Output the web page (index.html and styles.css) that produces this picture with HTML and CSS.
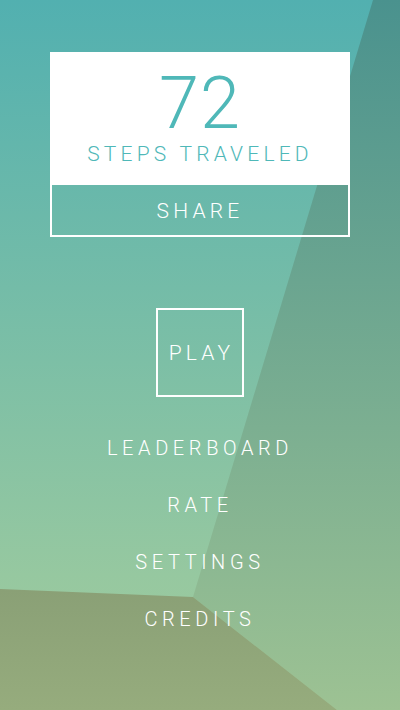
FILE: index.html
```html
<!DOCTYPE html>
<html>
<head>
<meta charset="utf-8">
<link rel="stylesheet" href="styles.css">
</head>
<body>
<div class="screen">
  <svg class="bg" width="400" height="710" viewBox="0 0 400 710" aria-hidden="true">
    <defs>
      <linearGradient id="gMain" x1="0" y1="0" x2="0" y2="710" gradientUnits="userSpaceOnUse">
        <stop offset="0" stop-color="#52b0b0"/>
        <stop offset="0.81" stop-color="#96c8a0"/>
        <stop offset="1" stop-color="#a2cc9c"/>
      </linearGradient>
      <linearGradient id="gRight" x1="0" y1="0" x2="0" y2="710" gradientUnits="userSpaceOnUse">
        <stop offset="0" stop-color="#4a928e"/>
        <stop offset="1" stop-color="#9dc293"/>
      </linearGradient>
      <linearGradient id="gBottom" x1="0" y1="589" x2="0" y2="710" gradientUnits="userSpaceOnUse">
        <stop offset="0" stop-color="#8aa076"/>
        <stop offset="1" stop-color="#96ac7d"/>
      </linearGradient>
    </defs>
    <rect x="0" y="0" width="400" height="710" fill="url(#gMain)"/>
    <polygon points="373,0 400,0 400,710 337,710 193,597" fill="url(#gRight)"/>
    <polygon points="0,589 193,597 337,710 0,710" fill="url(#gBottom)"/>
  </svg>

  <main class="content">
    <section class="card">
      <div class="card-top">
        <div class="score">72</div>
        <div class="score-label">STEPS TRAVELED</div>
      </div>
      <div class="share">SHARE</div>
    </section>

    <div class="play">PLAY</div>

    <nav class="menu">
      <div class="menu-item">LEADERBOARD</div>
      <div class="menu-item">RATE</div>
      <div class="menu-item">SETTINGS</div>
      <div class="menu-item">CREDITS</div>
    </nav>
  </main>
</div>
</body>
</html>
```

FILE: styles.css
```css
html, body {
  margin: 0;
  padding: 0;
}

body {
  width: 400px;
  height: 710px;
  overflow: hidden;
  font-family: Roboto, "Liberation Sans", sans-serif;
  font-weight: 300;
}

.screen {
  position: relative;
  width: 400px;
  height: 710px;
  overflow: hidden;
}

.bg {
  position: absolute;
  left: 0;
  top: 0;
  display: block;
}

.content {
  position: relative;
  display: flex;
  flex-direction: column;
  align-items: center;
  padding-top: 52px;
  color: #ffffff;
}

.card {
  width: 296px;
  border: 2px solid #ffffff;
  display: flex;
  flex-direction: column;
}

.card-top {
  background: #ffffff;
  height: 131px;
  display: flex;
  flex-direction: column;
  align-items: center;
  padding-top: 14px;
  box-sizing: border-box;
  color: #4fb8b8;
}

.score {
  font-size: 72px;
  line-height: 72px;
  font-weight: 300;
  letter-spacing: 1px;
}

.score-label {
  margin-top: 4px;
  font-size: 21px;
  line-height: 21px;
  letter-spacing: 4.2px;
}

.share {
  height: 50px;
  display: flex;
  align-items: center;
  justify-content: center;
  font-size: 21px;
  letter-spacing: 4.2px;
  padding-top: 1px;
  box-sizing: border-box;
}

.play {
  margin-top: 71px;
  width: 88px;
  height: 89px;
  border: 2px solid #ffffff;
  box-sizing: border-box;
  display: flex;
  align-items: center;
  justify-content: center;
  font-size: 21px;
  letter-spacing: 4.2px;
  padding-left: 3px;
}

.menu {
  margin-top: 23px;
  display: flex;
  flex-direction: column;
  align-items: center;
}

.menu-item {
  font-size: 20px;
  line-height: 57px;
  letter-spacing: 4.6px;
}
```
